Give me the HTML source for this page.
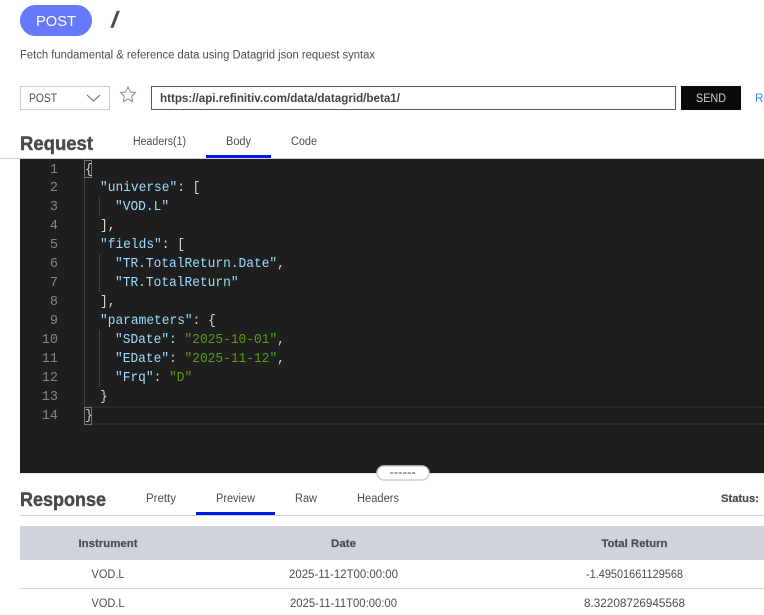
<!DOCTYPE html>
<html><head><meta charset="utf-8"><style>
html,body{margin:0;padding:0;background:#fff;width:764px;height:615px;overflow:hidden}
svg{display:block}
text{font-family:"Liberation Sans",sans-serif;fill:#4d4d4d;white-space:pre}
.b{font-weight:700}
.h{stroke:#4a4a4a;stroke-width:.45px}
.t{stroke:#4a4a4a;stroke-width:.2px}
.c text{font-family:"Liberation Mono",monospace;font-size:14px}
.c .n{font-size:13.5px;fill:#858585;text-anchor:end}
.k{fill:#9cdcfe}.p{fill:#d4d4d4}.s{fill:#5f9a0f}
</style></head><body>
<svg width="764" height="615" viewBox="0 0 764 615" xmlns="http://www.w3.org/2000/svg">
<rect x="20" y="5" width="72" height="31" rx="15.5" fill="#6679fb"/>
<text x="36" y="26" font-size="15" style="fill:#fff" textLength="40" lengthAdjust="spacingAndGlyphs">POST</text>
<text class="b h" x="111.500" y="27" font-size="22" style="fill:#4a4a4a;font-style:italic">/</text>
<text x="20" y="58.500" font-size="11.5" textLength="355" lengthAdjust="spacingAndGlyphs">Fetch fundamental &amp; reference data using Datagrid json request syntax</text>

<rect x="20.5" y="86.5" width="89" height="23" fill="#fff" stroke="#cfcfcf"/>
<text x="29" y="102" font-size="11.5" textLength="28" lengthAdjust="spacingAndGlyphs">POST</text>
<path d="M87 95l6.500 6 6.500-6" fill="none" stroke="#666" stroke-width="1"/>
<path d="M128 87l2.300 4.900 5.200.7-3.800 3.600.9 5.300-4.600-2.600-4.600 2.600.9-5.300-3.800-3.600 5.200-.7z" fill="#fff" stroke="#888" stroke-width="1"/>
<rect x="151.500" y="86.500" width="524" height="23" fill="#fff" stroke="#5a5a5a"/>
<text class="b" x="160" y="102" font-size="11.500" textLength="240" lengthAdjust="spacingAndGlyphs" style="fill:#444">https://api.refinitiv.com/data/datagrid/beta1/</text>
<rect x="681" y="86" width="60" height="24" fill="#0a0a0a"/>
<text x="696" y="102" font-size="11.500" style="fill:#cfcfcf" textLength="30" lengthAdjust="spacingAndGlyphs">SEND</text>
<text x="755" y="102" font-size="11.500" style="fill:#3b82f6">Re</text>

<text class="b h" x="20" y="150" font-size="19" textLength="73" lengthAdjust="spacingAndGlyphs" style="fill:#4a4a4a">Request</text>
<text x="133" y="145" font-size="11.500" textLength="53" lengthAdjust="spacingAndGlyphs">Headers(1)</text>
<text x="226" y="145" font-size="11.500" textLength="25" lengthAdjust="spacingAndGlyphs">Body</text>
<text x="291" y="145" font-size="11.500" textLength="26" lengthAdjust="spacingAndGlyphs">Code</text>
<rect x="0" y="158" width="764" height="1" fill="#d0d0d0"/>
<rect x="206" y="155" width="65" height="3" fill="#0018f0"/>

<rect x="20" y="159" width="744" height="314" fill="#1e1e1e"/>
<rect x="20" y="473" width="744" height="1" fill="#e4e4e4"/>
<rect x="84" y="159" width="1" height="266" fill="#404040"/>
<rect x="99" y="197" width="1" height="19" fill="#404040"/>
<rect x="99" y="254" width="1" height="38" fill="#404040"/>
<rect x="99" y="330" width="1" height="57" fill="#404040"/>
<rect x="85" y="406" width="679" height="2" fill="#282828"/>
<rect x="85" y="423" width="679" height="2" fill="#282828"/>
<rect x="84.500" y="160.500" width="7" height="17" fill="none" stroke="#777"/>
<rect x="84.500" y="407.500" width="7" height="17" fill="none" stroke="#777"/>
<g class="c">
<text class="n" x="58" y="173">1</text>
<text class="n" x="58" y="191">2</text>
<text class="n" x="58" y="210">3</text>
<text class="n" x="58" y="229">4</text>
<text class="n" x="58" y="248">5</text>
<text class="n" x="58" y="267">6</text>
<text class="n" x="58" y="286">7</text>
<text class="n" x="58" y="305">8</text>
<text class="n" x="58" y="324">9</text>
<text class="n" x="58" y="343">10</text>
<text class="n" x="58" y="362">11</text>
<text class="n" x="58" y="381">12</text>
<text class="n" x="58" y="400">13</text>
<text class="n" x="58" y="419">14</text>
<text class="p" transform="translate(85 173) scale(.92 1)">{</text>
<text transform="translate(100 191) scale(.92 1)"><tspan class="k">"universe"</tspan><tspan class="p">: [</tspan></text>
<text class="k" transform="translate(115 210) scale(.92 1)">"VOD.L"</text>
<text class="p" transform="translate(100 229) scale(.92 1)">],</text>
<text transform="translate(100 248) scale(.92 1)"><tspan class="k">"fields"</tspan><tspan class="p">: [</tspan></text>
<text transform="translate(115 267) scale(.92 1)"><tspan class="k">"TR.TotalReturn.Date"</tspan><tspan class="p">,</tspan></text>
<text class="k" transform="translate(115 286) scale(.92 1)">"TR.TotalReturn"</text>
<text class="p" transform="translate(100 305) scale(.92 1)">],</text>
<text transform="translate(100 324) scale(.92 1)"><tspan class="k">"parameters"</tspan><tspan class="p">: {</tspan></text>
<text transform="translate(115 343) scale(.92 1)"><tspan class="k">"SDate"</tspan><tspan class="p">: </tspan><tspan class="s">"2025-10-01"</tspan><tspan class="p">,</tspan></text>
<text transform="translate(115 362) scale(.92 1)"><tspan class="k">"EDate"</tspan><tspan class="p">: </tspan><tspan class="s">"2025-11-12"</tspan><tspan class="p">,</tspan></text>
<text transform="translate(115 381) scale(.92 1)"><tspan class="k">"Frq"</tspan><tspan class="p">: </tspan><tspan class="s">"D"</tspan></text>
<text class="p" transform="translate(100 400) scale(.92 1)">}</text>
<text class="p" transform="translate(85 419) scale(.92 1)">}</text>
</g>

<rect x="377" y="466" width="52" height="14" rx="7" fill="#fff" stroke="#cfcfcf" stroke-width="1.500"/>
<path d="M390 473h26" stroke="#8a8a8a" stroke-width="1.500" stroke-dasharray="3.200 1.200"/>

<text class="b h" x="20" y="506" font-size="19" textLength="86" lengthAdjust="spacingAndGlyphs" style="fill:#4a4a4a">Response</text>
<text x="146" y="502" font-size="11.500" textLength="30" lengthAdjust="spacingAndGlyphs">Pretty</text>
<text x="216" y="502" font-size="11.500" textLength="39" lengthAdjust="spacingAndGlyphs">Preview</text>
<text x="295" y="502" font-size="11.500" textLength="22" lengthAdjust="spacingAndGlyphs">Raw</text>
<text x="357" y="502" font-size="11.500" textLength="42" lengthAdjust="spacingAndGlyphs">Headers</text>
<text class="b t" x="721" y="502" font-size="11" textLength="38" lengthAdjust="spacingAndGlyphs">Status:</text>
<rect x="20" y="515" width="744" height="1" fill="#d0d0d0"/>
<rect x="196" y="512" width="79" height="3" fill="#0018f0"/>

<rect x="20" y="526" width="744" height="34" fill="#d1d3dc"/>
<text class="b t" x="108" y="547" font-size="11" text-anchor="middle" textLength="59" lengthAdjust="spacingAndGlyphs">Instrument</text>
<text class="b t" x="343.500" y="547" font-size="11" text-anchor="middle" textLength="25" lengthAdjust="spacingAndGlyphs">Date</text>
<text class="b t" x="634.500" y="547" font-size="11" text-anchor="middle" textLength="66" lengthAdjust="spacingAndGlyphs">Total Return</text>
<text x="108" y="578" font-size="11.500" text-anchor="middle" textLength="33" lengthAdjust="spacingAndGlyphs">VOD.L</text>
<text x="343.500" y="578" font-size="11.500" text-anchor="middle" textLength="109" lengthAdjust="spacingAndGlyphs">2025-11-12T00:00:00</text>
<text x="634.500" y="578" font-size="11.500" text-anchor="middle" textLength="97" lengthAdjust="spacingAndGlyphs">-1.49501661129568</text>
<rect x="20" y="588" width="744" height="1" fill="#d8dae0"/>
<text x="108" y="607" font-size="11.500" text-anchor="middle" textLength="33" lengthAdjust="spacingAndGlyphs">VOD.L</text>
<text x="343.500" y="607" font-size="11.500" text-anchor="middle" textLength="107" lengthAdjust="spacingAndGlyphs">2025-11-11T00:00:00</text>
<text x="634.500" y="607" font-size="11.500" text-anchor="middle" textLength="101" lengthAdjust="spacingAndGlyphs">8.32208726945568</text>
</svg>
</body></html>
